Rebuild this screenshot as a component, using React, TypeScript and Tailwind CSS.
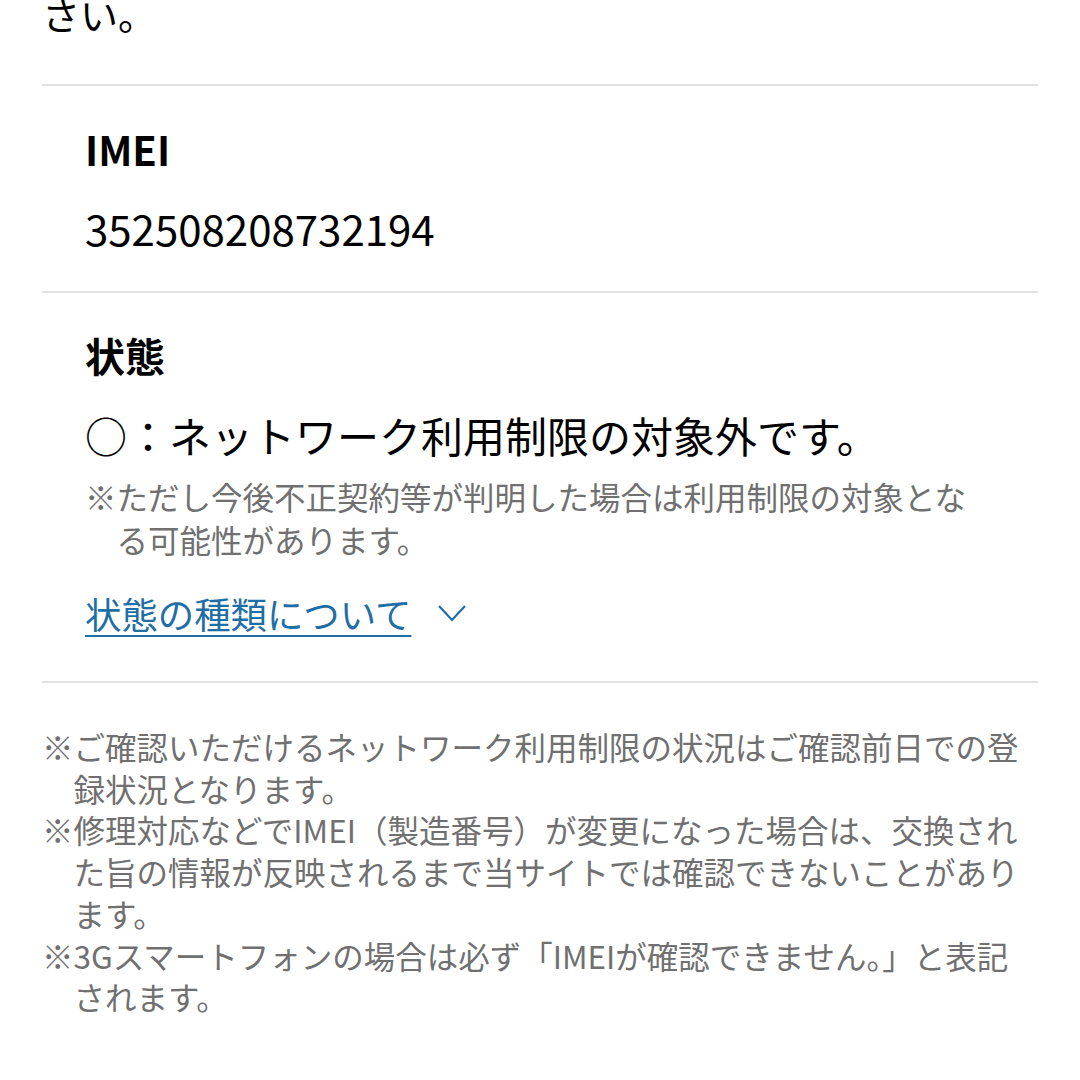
const jp = { fontFamily: '"Noto Sans CJK JP", "Noto Sans", sans-serif' };

function Note({ children }: { children: React.ReactNode }) {
  return <p className="pl-[1em] -indent-[1em]">{children}</p>;
}

export default function App() {
  return (
    <div className="min-h-[1080px] bg-white text-black overflow-hidden" style={jp}>
      <div className="px-[42px]">
        <p className="-mt-[15px] text-[38px] leading-[57px]">さい。</p>

        <section className="mt-[42px] border-t-2 border-[#e2e2e2] pl-[43px] pt-[35px] pb-[35px]">
          <h2 className="text-[40px] leading-[56px] font-bold">IMEI</h2>
          <p className="mt-[23px] text-[42px] leading-[56px]">352508208732194</p>
        </section>

        <section className="border-t-2 border-[#e2e2e2] pl-[43px] pr-[43px] pt-[34px] pb-[43px]">
          <h2 className="text-[40px] leading-[56px] font-bold">状態</h2>
          <p className="mt-[24px] text-[42px] leading-[56px]">○：ネットワーク利用制限の対象外です。</p>
          <div className="mt-[12px] text-[31.5px] leading-[43px] text-[#707070]">
            <Note>※ただし今後不正契約等が判明した場合は利用制限の対象となる可能性があります。</Note>
          </div>
          <a className="mt-[27px] flex items-center gap-[26px] text-[36.4px] leading-[50px] text-[#1f6ea6]" href="#">
            <span className="underline underline-offset-[6px] decoration-2">状態の種類について</span>
            <svg width="30" height="18" viewBox="0 0 30 18" fill="none" stroke="#1f6ea6" strokeWidth="2.2">
              <path d="M2 2 L15 16 L28 2" />
            </svg>
          </a>
        </section>

        <section className="border-t-2 border-[#e2e2e2] pt-[43px] text-[31.5px] leading-[41.7px] text-[#707070]">
          <Note>※ご確認いただけるネットワーク利用制限の状況はご確認前日での登録状況となります。</Note>
          <Note>※修理対応などでIMEI（製造番号）が変更になった場合は、交換された旨の情報が反映されるまで当サイトでは確認できないことがあります。</Note>
          <Note>※3Gスマートフォンの場合は必ず「IMEIが確認できません。」と表記されます。</Note>
        </section>
      </div>
    </div>
  );
}
